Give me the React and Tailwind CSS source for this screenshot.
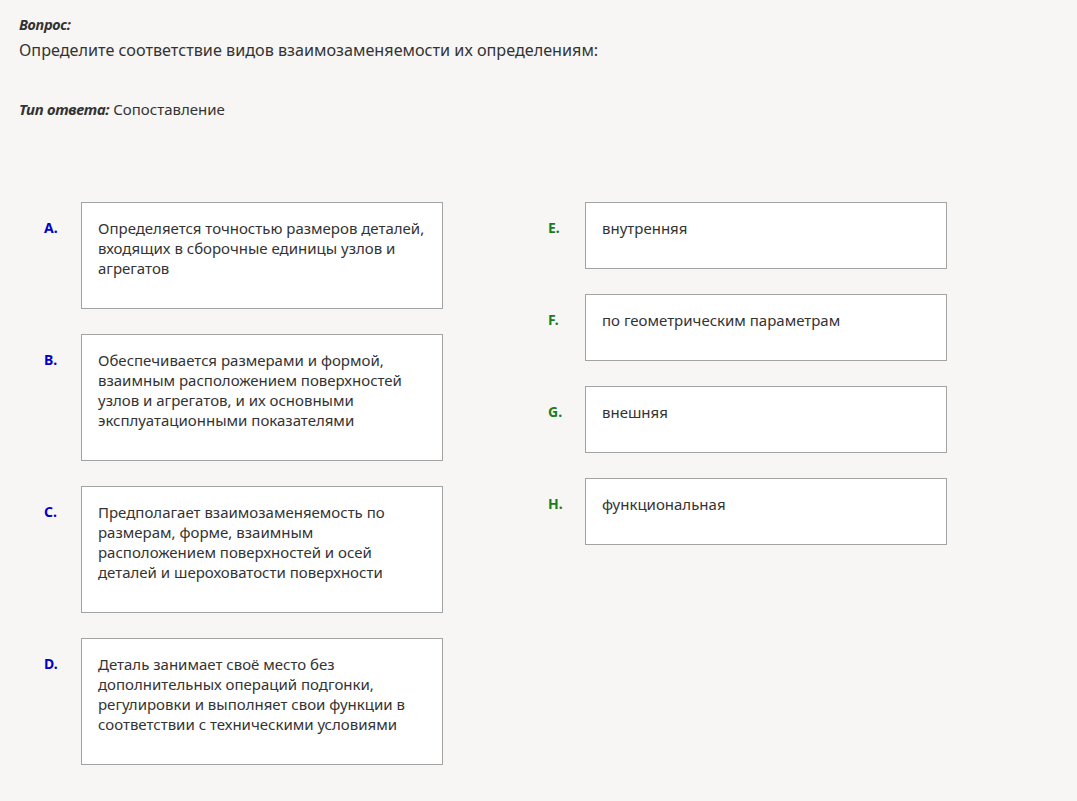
import React from 'react';

const left = [
  { key: 'A.', text: 'Определяется точностью размеров деталей, входящих в сборочные единицы узлов и агрегатов' },
  { key: 'B.', text: 'Обеспечивается размерами и формой, взаимным расположением поверхностей узлов и агрегатов, и их основными эксплуатационными показателями' },
  { key: 'C.', text: 'Предполагает взаимозаменяемость по размерам, форме, взаимным расположением поверхностей и осей деталей и шероховатости поверхности' },
  { key: 'D.', text: 'Деталь занимает своё место без дополнительных операций подгонки, регулировки и выполняет свои функции в соответствии с техническими условиями' },
];

const right = [
  { key: 'E.', text: 'внутренняя' },
  { key: 'F.', text: 'по геометрическим параметрам' },
  { key: 'G.', text: 'внешняя' },
  { key: 'H.', text: 'функциональная' },
];

function Row({ item, color }) {
  return (
    <div className="flex items-start">
      <div className={`w-[37px] shrink-0 pt-[16px] text-[14px] font-bold leading-[20px] ${color}`}>{item.key}</div>
      <div className="w-[362px] border border-[#a3a3a3] bg-white pl-4 pr-3 pt-[15px] pb-[30px] text-[15px] leading-[20px] text-[#333]">
        {item.text}
      </div>
    </div>
  );
}

export default function App() {
  return (
    <div className="min-h-[801px] bg-[#f7f6f5] px-[19px] pt-[14px] font-['Noto_Sans','Open_Sans',sans-serif] text-[#333]">
      <div className="text-[14.5px] font-bold italic leading-[20px] tracking-[-0.3px]">Вопрос:</div>
      <div className="mt-[5px] text-[16.2px] leading-[22px]">Определите соответствие видов взаимозаменяемости их определениям:</div>
      <div className="mt-[38px] text-[15px] leading-[20px]">
        <span className="font-bold italic tracking-[-0.3px]">Тип ответа:</span> Сопоставление
      </div>

      <div className="mt-[83px] flex gap-[105px] pl-[25px]">
        <div className="flex flex-col gap-[25px]">
          {left.map(i => <Row key={i.key} item={i} color="text-[#0000c8]" />)}
        </div>
        <div className="flex flex-col gap-[25px]">
          {right.map(i => <Row key={i.key} item={i} color="text-[#1b7d1b]" />)}
        </div>
      </div>
    </div>
  );
}
